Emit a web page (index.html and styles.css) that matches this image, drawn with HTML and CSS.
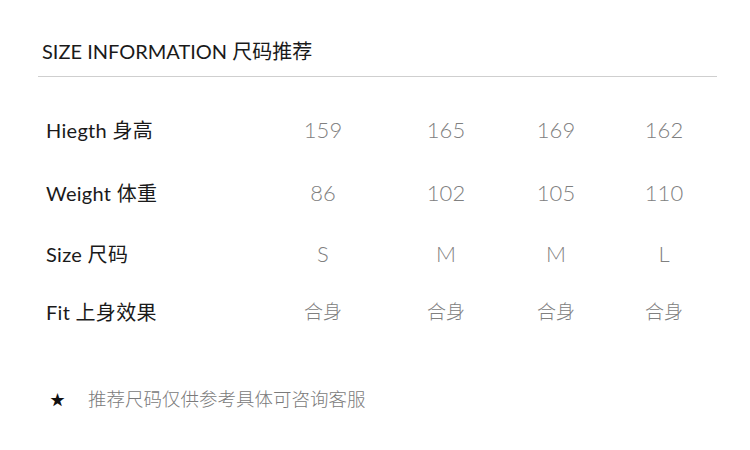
FILE: index.html
```html
<!DOCTYPE html>
<html lang="zh">
<head>
<meta charset="utf-8">
<link rel="stylesheet" href="styles.css">
</head>
<body>
<div class="page">
  <header class="head">
    <h1 class="title">SIZE INFORMATION 尺码推荐</h1>
  </header>
  <div class="table">
    <div class="label">Hiegth 身高</div>
    <div class="val num">159</div>
    <div class="val num">165</div>
    <div class="val num">169</div>
    <div class="val num">162</div>

    <div class="label">Weight 体重</div>
    <div class="val num">86</div>
    <div class="val num">102</div>
    <div class="val num">105</div>
    <div class="val num">110</div>

    <div class="label">Size 尺码</div>
    <div class="val num">S</div>
    <div class="val num">M</div>
    <div class="val num">M</div>
    <div class="val num">L</div>

    <div class="label">Fit 上身效果</div>
    <div class="val cjk">合身</div>
    <div class="val cjk">合身</div>
    <div class="val cjk">合身</div>
    <div class="val cjk">合身</div>
  </div>
  <p class="note"><span class="star">★</span><span class="note-text">推荐尺码仅供参考具体可咨询客服</span></p>
</div>
</body>
</html>
```

FILE: styles.css
```css
html, body {
  margin: 0;
  padding: 0;
  background: #ffffff;
}
.page {
  width: 750px;
  height: 450px;
  font-family: "Lato", "Noto Sans CJK SC", sans-serif;
  color: #1a1a1a;
  overflow: hidden;
}
.head {
  margin: 0 33px 0 38px;
  padding: 40px 0 14px 4px;
  border-bottom: 1px solid #cfcfcf;
}
.title {
  margin: 0;
  font-size: 20px;
  font-weight: 400;
  line-height: 22px;
  letter-spacing: 0;
  color: #1a1a1a;
}
.table {
  display: grid;
  grid-template-columns: 217px 120px 126px 94px 122px;
  grid-template-rows: 62px 63px 60px 56px;
  margin: 22px 0 0 46px;
  align-items: center;
}
.label {
  font-size: 20px;
  line-height: 24px;
  letter-spacing: 0.3px;
  color: #1a1a1a;
}
.val {
  text-align: center;
  color: #808080;
}
.num {
  font-size: 22px;
  line-height: 26px;
  font-weight: 300;
}
.cjk {
  font-size: 19px;
  line-height: 24px;
  font-weight: 300;
}
.note {
  margin: 48px 0 0 50px;
  display: flex;
  align-items: center;
  line-height: 22px;
}
.star {
  color: #111;
  font-size: 15px;
  width: 38px;
}
.note-text {
  color: #7a7a7a;
  font-size: 18.5px;
  font-weight: 300;
}
```
